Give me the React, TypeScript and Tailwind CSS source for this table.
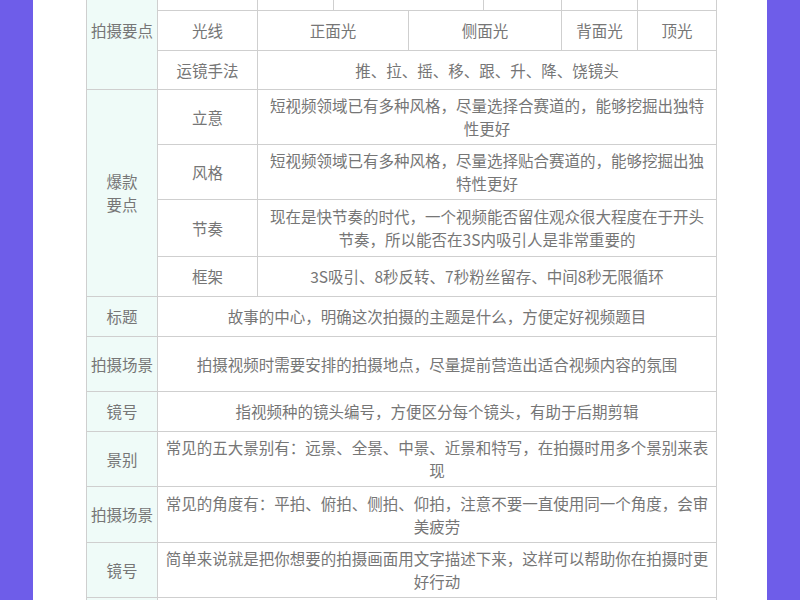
import React from "react";

const cell = "border border-[#cfcfcf] text-center align-middle p-0";
const label = `${cell} bg-[#effbf8]`;

type Row = { label: string; lines: string[]; h: string };

const bottomRows: Row[] = [
  { label: "标题", lines: ["故事的中心，明确这次拍摄的主题是什么，方便定好视频题目"], h: "h-[40px]" },
  { label: "拍摄场景", lines: ["拍摄视频时需要安排的拍摄地点，尽量提前营造出适合视频内容的氛围"], h: "h-[55px]" },
  { label: "镜号", lines: ["指视频种的镜头编号，方便区分每个镜头，有助于后期剪辑"], h: "h-[40px]" },
  {
    label: "景别",
    lines: ["常见的五大景别有：远景、全景、中景、近景和特写，在拍摄时用多个景别来表", "现"],
    h: "h-[55px]",
  },
  {
    label: "拍摄场景",
    lines: ["常见的角度有：平拍、俯拍、侧拍、仰拍，注意不要一直使用同一个角度，会审", "美疲劳"],
    h: "h-[56px]",
  },
  {
    label: "镜号",
    lines: ["简单来说就是把你想要的拍摄画面用文字描述下来，这样可以帮助你在拍摄时更", "好行动"],
    h: "h-[55px]",
  },
];

const hotRows: Row[] = [
  { label: "立意", lines: ["短视频领域已有多种风格，尽量选择合赛道的，能够挖掘出独特", "性更好"], h: "h-[55px]" },
  { label: "风格", lines: ["短视频领域已有多种风格，尽量选择贴合赛道的，能够挖掘出独", "特性更好"], h: "h-[55px]" },
  { label: "节奏", lines: ["现在是快节奏的时代，一个视频能否留住观众很大程度在于开头", "节奏，所以能否在3S内吸引人是非常重要的"], h: "h-[57px]" },
  { label: "框架", lines: ["3S吸引、8秒反转、7秒粉丝留存、中间8秒无限循环"], h: "h-[40px]" },
];

function Lines({ lines }: { lines: string[] }) {
  return (
    <>
      {lines.map((l, i) => (
        <div key={i} className="whitespace-nowrap">
          {l}
        </div>
      ))}
    </>
  );
}

export default function App() {
  return (
    <div className="w-[800px] h-[600px] overflow-hidden bg-[#6e5de9] px-[33px]">
      <div className="h-full bg-white pl-[53px] pr-[51px] overflow-hidden">
        <table
          className="table-fixed border-collapse w-[630px] mt-[-30px] text-[15.5px] leading-[23px] text-[#767676]"
          style={{ fontFamily: '"Noto Sans CJK SC", "Noto Sans", sans-serif' }}
        >
          <colgroup>
            <col className="w-[71px]" />
            <col className="w-[100px]" />
            <col className="w-[76px]" />
            <col className="w-[75px]" />
            <col className="w-[75px]" />
            <col className="w-[78px]" />
            <col className="w-[76px]" />
            <col className="w-[79px]" />
          </colgroup>
          <tbody>
            <tr className="h-[40px]">
              <td rowSpan={3} className={label}>
                拍摄要点
              </td>
              <td className={cell}></td>
              <td className={cell}></td>
              <td colSpan={2} className={cell}></td>
              <td className={cell}></td>
              <td className={cell}></td>
              <td className={cell}></td>
            </tr>
            <tr className="h-[40px]">
              <td className={cell}>光线</td>
              <td colSpan={2} className={cell}>正面光</td>
              <td colSpan={2} className={cell}>侧面光</td>
              <td className={cell}>背面光</td>
              <td className={cell}>顶光</td>
            </tr>
            <tr className="h-[39px]">
              <td className={cell}>运镜手法</td>
              <td colSpan={6} className={cell}>推、拉、摇、移、跟、升、降、饶镜头</td>
            </tr>
            {hotRows.map((r, i) => (
              <tr key={r.label} className={r.h}>
                {i === 0 && (
                  <td rowSpan={4} className={label}>
                    爆款
                    <br />
                    要点
                  </td>
                )}
                <td className={cell}>{r.label}</td>
                <td colSpan={6} className={cell}>
                  <Lines lines={r.lines} />
                </td>
              </tr>
            ))}
            {bottomRows.map((r, i) => (
              <tr key={i} className={r.h}>
                <td className={label}>{r.label}</td>
                <td colSpan={7} className={cell}>
                  <Lines lines={r.lines} />
                </td>
              </tr>
            ))}
            <tr className="h-[40px]">
              <td className={label}></td>
              <td colSpan={7} className={cell}></td>
            </tr>
          </tbody>
        </table>
      </div>
    </div>
  );
}
